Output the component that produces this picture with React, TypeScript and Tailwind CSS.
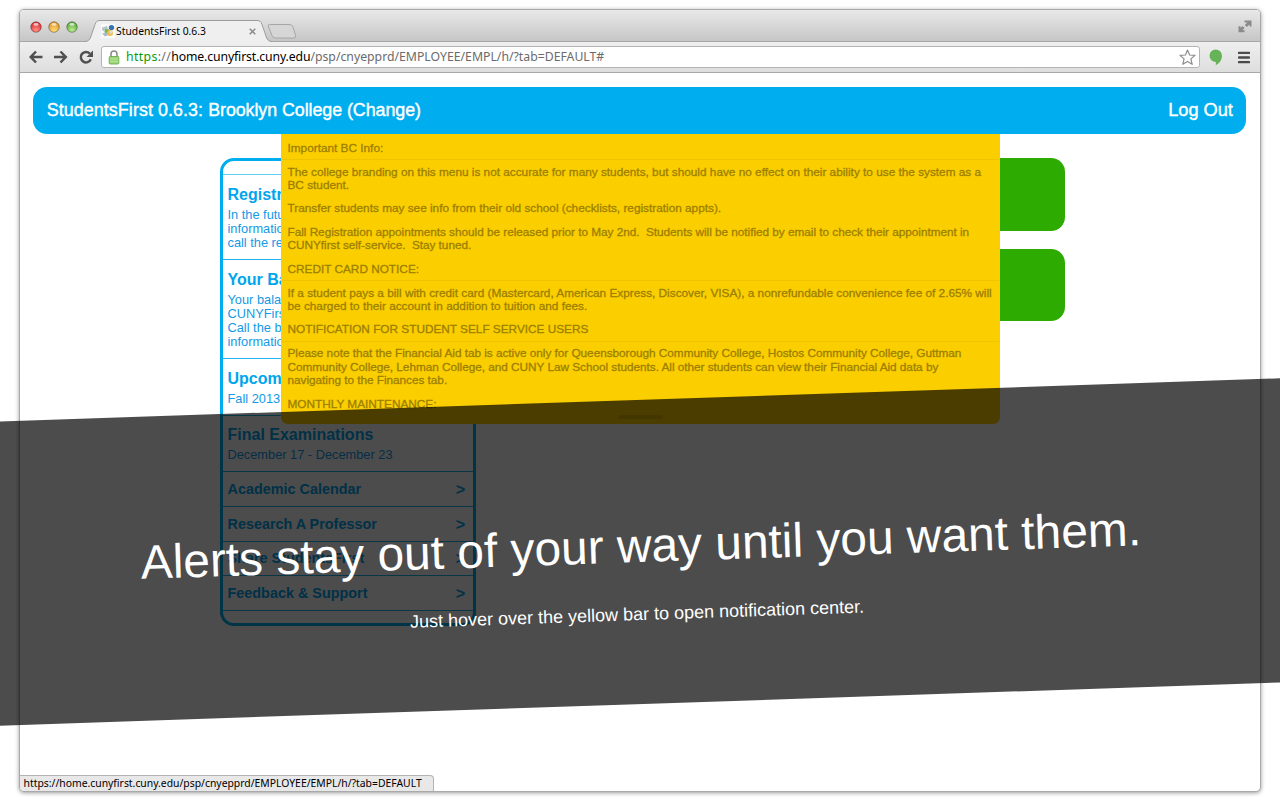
import React from "react";

const summaries = [
  { title: "Registration", lines: ["In the future, registration", "information will be here,", "call the registrar"], row: "h-[85px] pt-[9px]" },
  { title: "Your Balance", lines: ["Your balance is on", "CUNYFirst.", "Call the bursar for", "information."], row: "h-[99px] pt-[9px]" },
  { title: "Upcoming", lines: ["Fall 2013"], row: "h-[57px] pt-[9px]" },
  { title: "Final Examinations", lines: ["December 17 - December 23"], row: "h-[56px] pt-[8px]" },
];

const links = [
  { label: "Academic Calendar", row: "h-[35px]" },
  { label: "Research A Professor", row: "h-[35px]" },
  { label: "Share StudentsFirst", row: "h-[34px]" },
  { label: "Feedback & Support", row: "h-[35px]" },
];

function TrafficLight({ id, x, light, dark }: { id: string; x: number; light: string; dark: string }) {
  return (
    <g>
      <defs>
        <radialGradient id={id} cx="0.5" cy="0.8" r="0.75">
          <stop offset="0" stopColor={light} />
          <stop offset="1" stopColor={dark} />
        </radialGradient>
      </defs>
      <circle cx={x} cy="7" r="5.3" fill={`url(#${id})`} stroke="#000" strokeOpacity="0.35" strokeWidth="0.9" />
      <ellipse cx={x} cy="4.4" rx="2.6" ry="1.4" fill="#fff" opacity="0.65" />
    </g>
  );
}

function TabStrip() {
  return (
    <div className="relative flex h-8 border-b border-[#a6a6a6] bg-linear-to-b from-[#e9e9e9] to-[#c6c6c6]">
      <svg width="54" height="14" className="ml-[9px] mt-[10px]">
        <TrafficLight id="red" x={7} light="#ff8f84" dark="#d8282f" />
        <TrafficLight id="amber" x={25} light="#ffdd7a" dark="#e0901e" />
        <TrafficLight id="green" x={43} light="#b9ee90" dark="#56a437" />
      </svg>
      <svg width="190" height="22" viewBox="0 0 190 22" className="absolute left-[65px] top-[10px]">
        <path d="M0 21.500 C3.500 21.300 4.500 20 5.700 17 L10 4.500 C11.200 1.300 12.300 .5 15 .5 H172 C174.700 .5 175.800 1.300 177 4.500 L181.300 17 C182.500 20 183.500 21.300 187 21.500 V22 H0Z" fill="#efefef" />
        <path d="M0 21.500 C3.500 21.300 4.500 20 5.700 17 L10 4.500 C11.200 1.300 12.300 .5 15 .5 H172 C174.700 .5 175.800 1.300 177 4.500 L181.300 17 C182.500 20 183.500 21.300 187 21.500" fill="none" stroke="#9c9c9c" />
      </svg>
      <svg width="32" height="17" viewBox="0 0 32 17" className="absolute left-[246px] top-[13px]">
        <path d="M3.500 1.500 H23 Q26 1.500 27 4 L29.500 12.500 Q30 15 28 15 H9.500 Q7 15 6 12.500 L2.500 4 Q1.500 1.500 3.500 1.500Z" fill="#d6d6d6" stroke="#a6a6a6" />
      </svg>
      <div className="relative ml-[18px] mt-[11px] flex h-5 w-[160px] items-center">
        <svg width="14" height="14" viewBox="0 0 14 14" className="shrink-0">
          <rect width="14" height="14" fill="#fafafa" />
          <path d="M1 3.500 L6 2 L7 5 L4 8 L1 6Z" fill="#b9c4c6" />
          <circle cx="10.500" cy="3.600" r="2.700" fill="#3673b0" />
          <path d="M4.500 5 L8.500 5.500 L7 9 L3.500 9.500Z" fill="#7db443" />
          <circle cx="9" cy="9" r="3" fill="#f2bd49" />
          <path d="M1 9.500 L6 8.500 L7.500 11 L4 12.500Z" fill="#a9bbc9" />
          <path d="M8 7.500 L11 6.500 L11.500 8.500 L9.500 10Z" fill="#d9dfe0" />
        </svg>
        <span className="ml-px mt-[2px] whitespace-nowrap font-['Noto_Sans',sans-serif] text-[10.34px] text-black">StudentsFirst 0.6.3</span>
        <svg width="7" height="7" viewBox="0 0 7 7" className="ml-auto mr-[5px] mt-[1px] shrink-0">
          <path d="M.7 .7 L6.300 6.300 M6.300 .7 L.7 6.300" stroke="#8a8a8a" strokeWidth="1.500" />
        </svg>
      </div>
      <svg width="14" height="13" viewBox="0 0 14 13" className="ml-auto mr-[8px] mt-[10px]">
        <path d="M6.500 .5 H13.500 V6.500 H11.500 V4.500 L8.800 7 L6.800 5 L9.300 2.500 H6.500Z" fill="#8a8a8a" />
        <path d="M.5 6.300 H2.500 L2.500 8 L4.500 6 L6.500 8 L4.500 10.300 H6.500 V12.300 H.5Z" fill="#8a8a8a" />
      </svg>
    </div>
  );
}

function Toolbar() {
  return (
    <div className="flex h-[31px] items-center border-b border-[#a8a8a8] bg-linear-to-b from-[#efefef] to-[#dedede]">
      <svg width="66" height="16" viewBox="0 0 66 16" className="ml-[9px] shrink-0" fill="none" stroke="#505050" strokeWidth="2.500">
        <path d="M1.500 8 H13.500 M7 2.500 L1.700 8 L7 13.500" />
        <path d="M25 8 H37 M31.500 2.500 L36.800 8 L31.500 13.500" />
        <path d="M60.800 4.600 A5.200 5.200 0 1 0 61.800 10.200" />
        <path d="M64 1.500 V8 H57.500Z" fill="#505050" stroke="none" />
      </svg>
      <div className="ml-[6px] flex h-[22px] flex-1 items-center rounded-[3px] border border-[#b4b4b4] bg-white">
        <svg width="12" height="15" viewBox="0 0 12 15" className="ml-[6px] shrink-0">
          <path d="M3 7 V4 A3 3 0 0 1 9 4 V7" fill="none" stroke="#8d8d8d" strokeWidth="1.600" />
          <rect x="1.200" y="6.500" width="9.600" height="7.500" rx="1" fill="#9bd67a" stroke="#6cab4b" strokeWidth="0.900" />
          <path d="M2 9 H10 M2 11.500 H10" stroke="#b5e69a" strokeWidth="0.800" />
        </svg>
        <span className="ml-[6px] whitespace-nowrap font-['Noto_Sans',sans-serif] text-[12.25px] text-[#6b6b6b]">
          <span className="tracking-[0.37px]"><span className="text-[#0b9a0b]">https</span>://</span><span className="tracking-[-0.12px] text-black">home.cunyfirst.cuny.edu</span>/psp/cnyepprd/EMPLOYEE/EMPL/h/?tab=DEFAULT#
        </span>
        <svg width="17" height="17" viewBox="0 0 17 17" className="ml-auto mr-[3px] shrink-0">
          <path d="M8.500 1 L10.600 6 L16 6.400 L11.900 9.900 L13.200 15.300 L8.500 12.400 L3.800 15.300 L5.100 9.900 L1 6.400 L6.400 6Z" fill="#fff" stroke="#8c8c8c" strokeWidth="1.200" strokeLinejoin="round" />
        </svg>
      </div>
      <svg width="14" height="17" viewBox="0 0 14 17" className="ml-[9px] shrink-0">
        <path d="M6.700 .5 A6.300 6.300 0 0 1 13 6.800 C13 11.500 9.800 14.800 6.800 16.300 V13 A6.200 6.200 0 0 1 6.700 .5Z" fill="#66b457" />
      </svg>
      <svg width="12" height="13" viewBox="0 0 12 13" className="ml-[15px] mr-[10px] shrink-0">
        <path d="M1 1.900 H11 M1 6.500 H11 M1 11.100 H11" stroke="#4a4a4a" strokeWidth="2.400" strokeLinecap="round" />
      </svg>
    </div>
  );
}

function Sidebar() {
  return (
    <div className="h-[468px] w-[256px] shrink-0 overflow-hidden rounded-[14px] border-[3px] border-[#00aeef] text-[#00a5ee]">
      <div className="h-[14px] border-b border-[#62cdf5]" />
      {summaries.map((s) => (
        <div key={s.title} className={`border-b border-[#1fb4ee] pl-[4.500px] ${s.row}`}>
          <div className="whitespace-nowrap text-[16px] font-bold leading-[21px]">{s.title}</div>
          <div className="mt-[2.500px] text-[12.8px] leading-[14.33px] text-[#1499e6]">
            {s.lines.map((l) => (
              <div key={l} className="whitespace-nowrap">{l}</div>
            ))}
          </div>
        </div>
      ))}
      {links.map((l) => (
        <div key={l.label} className={`flex items-center justify-between border-b border-[#1fb4ee] pl-[4.500px] pr-[8px] pt-px text-[14.4px] font-bold ${l.row}`}>
          <span>{l.label}</span>
          <span className="text-[16px]">&gt;</span>
        </div>
      ))}
    </div>
  );
}

function Heading({ children }: { children: React.ReactNode }) {
  return <div className="mx-px h-[18.500px] border-b border-[#efc300] pl-[5.500px]">{children}</div>;
}

function Para({ lines }: { lines: string[] }) {
  return (
    <div className="pl-[6.500px]">
      {lines.map((l) => (
        <div key={l}>{l}</div>
      ))}
    </div>
  );
}

function Notifications() {
  return (
    <div className="absolute left-[261px] top-[61px] h-[290px] w-[719px] overflow-hidden whitespace-pre rounded-b-[7px] bg-[#fbce00] pt-[5px] text-[11.8px] leading-[13.4px] text-[#9c8000] [-webkit-text-stroke:0.3px_#9c8000]">
      <div className="flex flex-col">
        <div className="pt-[2.500px]"><Heading>Important BC Info:</Heading></div>
        <div className="pt-[5.500px]"><Para lines={["The college branding on this menu is not accurate for many students, but should have no effect on their ability to use the system as a", "BC student."]} /></div>
        <div className="pt-[10px]"><Para lines={["Transfer students may see info from their old school (checklists, registration appts)."]} /></div>
        <div className="pt-[10px] tracking-[-0.032px]"><Para lines={["Fall Registration appointments should be released prior to May 2nd.  Students will be notified by email to check their appointment in", "CUNYfirst self-service.  Stay tuned."]} /></div>
        <div className="pt-[10px]"><Heading>CREDIT CARD NOTICE:</Heading></div>
        <div className="pt-[5.500px]"><Para lines={["If a student pays a bill with credit card (Mastercard, American Express, Discover, VISA), a nonrefundable convenience fee of 2.65% will", "be charged to their account in addition to tuition and fees."]} /></div>
        <div className="pt-[10px]"><Heading>NOTIFICATION FOR STUDENT SELF SERVICE USERS</Heading></div>
        <div className="pt-[5.500px] tracking-[-0.034px]"><Para lines={["Please note that the Financial Aid tab is active only for Queensborough Community College, Hostos Community College, Guttman", "Community College, Lehman College, and CUNY Law School students. All other students can view their Financial Aid data by", "navigating to the Finances tab."]} /></div>
        <div className="pt-[10px]"><Para lines={["MONTHLY MAINTENANCE:"]} /></div>
      </div>
      <div className="absolute bottom-[5px] left-[337px] h-1 w-[45px] rounded-full bg-black/10" />
    </div>
  );
}

export default function App() {
  return (
    <div className="relative h-[800px] w-[1280px] overflow-hidden bg-white pl-[19px] pt-[9px] font-['Liberation_Sans',Arial,sans-serif]">
      <div className="relative flex h-[783px] w-[1242px] flex-col overflow-hidden rounded-[5px] border border-[#a9a9a9] bg-white shadow-[0_1px_4px_rgba(0,0,0,0.4)]">
        <TabStrip />
        <Toolbar />
        <div className="relative flex flex-1 flex-col">
          <header className="ml-[13.300px] mr-[13.600px] mt-[14px] flex h-[47px] shrink-0 items-center justify-between rounded-[14px] bg-[#00adef] px-[13.500px] text-[17.85px] text-white [-webkit-text-stroke:0.4px_#fff]">
            <span><span className="tracking-[0.08px]">StudentsFirst 0.6.3: </span><span className="tracking-[-0.06px]">Brooklyn College (Change)</span></span>
            <span className="text-[18.2px]">Log Out</span>
          </header>
          <main className="flex items-start justify-between pl-[200px] pr-[195px] pt-[24px]">
            <Sidebar />
            <div className="flex w-[570px] flex-col gap-[18px]">
              <div className="h-[72.500px] rounded-[14px] bg-[#2dab00]" />
              <div className="h-[72.500px] rounded-[14px] bg-[#2dab00]" />
            </div>
          </main>
          <Notifications />
          <div className="mt-auto h-4 w-[414px] rounded-tr-[4px] border-r border-t border-[#b3b3b3] bg-[#e8e8e8] pl-[3.500px] font-['Noto_Sans',sans-serif] text-[10.38px] leading-[15px] text-black">
            https://home.cunyfirst.cuny.edu/psp/cnyepprd/EMPLOYEE/EMPL/h/?tab=DEFAULT
          </div>
        </div>
      </div>
      <div className="absolute -left-[40px] top-[400.200px] flex h-[303.800px] w-[1360px] -rotate-[1.93deg] flex-col items-center whitespace-nowrap bg-black/70 pt-[117.500px] text-white">
        <div className="translate-x-[1px] text-[47.9px] leading-[56px]">Alerts stay out of your way until you want them.</div>
        <div className="mt-[30px] -translate-x-[5px] text-[18px] leading-[20px]">Just hover over the yellow bar to open notification center.</div>
      </div>
    </div>
  );
}
